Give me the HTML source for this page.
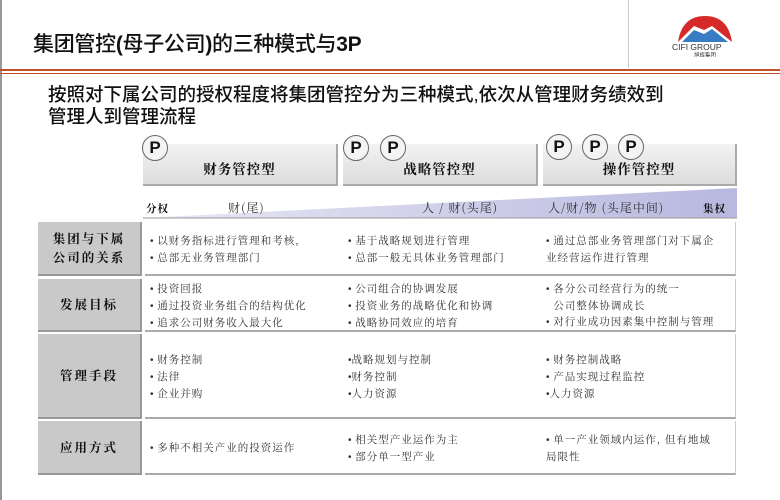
<!DOCTYPE html>
<html><head><meta charset="utf-8"><style>
*{margin:0;padding:0;box-sizing:border-box}
body{width:780px;height:500px;background:#fff;position:relative;overflow:hidden;font-family:"Liberation Sans","Noto Sans CJK SC",sans-serif;color:#111}
.a{position:absolute}
.title{left:33px;top:28px;font-size:21px;font-weight:500;letter-spacing:-0.3px}
.title b{font-weight:bold}
.sub{left:48px;top:84px;font-size:18.5px;line-height:22px;font-weight:500}
.hb{background:linear-gradient(#f3f3f3,#dcdcdc);border-right:2px solid #aaa;border-bottom:2px solid #aaa;font-family:"Noto Serif CJK SC",serif;font-weight:bold;font-size:13.5px;letter-spacing:1px;text-align:center;padding-top:14px}
.p{width:26px;height:26px;border-radius:50%;border:1px solid #666;background:#f4f4f4;font:bold 17px "Liberation Sans",sans-serif;text-align:center;line-height:24px}
.lab{left:38px;width:104px;background:#c9c9c9;border-right:2px solid #999;border-bottom:2px solid #999;font-family:"Noto Serif CJK SC",serif;font-weight:bold;font-size:12.5px;letter-spacing:2px;display:flex;align-items:center;justify-content:center;text-align:center;line-height:19px}
.row{left:145px;width:591px;border-bottom:2px solid #aaa;border-right:1px solid #ccc}
.t{font-family:"Noto Serif CJK SC",serif;font-size:10.5px;line-height:16px;color:#333;letter-spacing:1px;position:absolute}
i{font-style:normal;font-family:"Liberation Sans",sans-serif;font-size:10px;letter-spacing:0}
</style></head><body>
<div class="a" style="left:0;top:0;width:2px;height:500px;background:#999"></div>
<div class="a" style="left:628px;top:0;width:1px;height:68px;background:#ccc"></div>
<div class="a title">集团管控<b>(</b>母子公司<b>)</b>的三种模式与<b>3P</b></div>
<div class="a" style="left:0;top:69px;width:780px;height:2px;background:#c0502a"></div>
<div class="a" style="left:0;top:73px;width:780px;height:1px;background:#c0502a"></div>
<svg class="a" style="left:668px;top:12px" width="72" height="45" viewBox="0 0 72 45">
<path d="M10 30 Q14 4 37 4 Q60 4 64 30 L54 22 L44 14 L36 18 L26 14 L18 22Z" fill="#d62a2a"/>
<path d="M14 30 L26 18 L36 22 L44 17 L60 30 Z" fill="#3a7cc4"/>
<text x="4" y="38" font-size="8.5" font-family="Liberation Sans" fill="#333">CIFI  GROUP</text>
<text x="26" y="45" font-size="5.5" font-family="Noto Sans CJK SC" fill="#333">旭辉集团</text>
</svg>
<div class="a sub">按照对下属公司的授权程度将集团管控分为三种模式,依次从管理财务绩效到<br>管理人到管理流程</div>
<div class="a hb" style="left:143px;top:144px;width:195px;height:42px">财务管控型</div>
<div class="a hb" style="left:343px;top:144px;width:195px;height:42px">战略管控型</div>
<div class="a hb" style="left:543px;top:144px;width:194px;height:42px">操作管控型</div>
<div class="a p" style="left:142px;top:135px">P</div>
<div class="a p" style="left:343px;top:135px">P</div>
<div class="a p" style="left:380px;top:135px">P</div>
<div class="a p" style="left:546px;top:134px">P</div>
<div class="a p" style="left:582px;top:134px">P</div>
<div class="a p" style="left:618px;top:134px">P</div>
<svg class="a" style="left:143px;top:188px" width="594" height="32"><defs><linearGradient id="g"><stop offset="0" stop-color="#e8e8f4"/><stop offset="1" stop-color="#b8b8e0"/></linearGradient></defs><polygon points="0,30 594,0 594,30" fill="url(#g)"/><line x1="0" y1="30" x2="594" y2="30" stroke="#999"/></svg>
<div class="a t" style="left:146px;top:201px;font-weight:bold;color:#111">分权</div>
<div class="a t" style="left:228px;top:200px;font-size:12px">财(尾)</div>
<div class="a t" style="left:422px;top:200px;font-size:12px">人 / 财(头尾)</div>
<div class="a t" style="left:548px;top:200px;font-size:12px">人/财/物 (头尾中间)</div>
<div class="a t" style="left:703px;top:201px;font-weight:bold;color:#111">集权</div>

<div class="a lab" style="top:222px;height:54px">集团与下属<br>公司的关系</div>
<div class="a row" style="top:222px;height:54px"></div>
<div class="a t" style="left:150px;top:233px"><i>•</i> 以财务指标进行管理和考核,<br><i>•</i> 总部无业务管理部门</div>
<div class="a t" style="left:348px;top:233px"><i>•</i> 基于战略规划进行管理<br><i>•</i> 总部一般无具体业务管理部门</div>
<div class="a t" style="left:546px;top:233px"><i>•</i> 通过总部业务管理部门对下属企<br>业经营运作进行管理</div>

<div class="a lab" style="top:279px;height:53px">发展目标</div>
<div class="a row" style="top:279px;height:53px"></div>
<div class="a t" style="left:150px;top:281px"><i>•</i> 投资回报<br><i>•</i> 通过投资业务组合的结构优化<br><i>•</i> 追求公司财务收入最大化</div>
<div class="a t" style="left:348px;top:281px"><i>•</i> 公司组合的协调发展<br><i>•</i> 投资业务的战略优化和协调<br><i>•</i> 战略协同效应的培育</div>
<div class="a t" style="left:546px;top:281px"><i>•</i> 各分公司经营行为的统一<br>&nbsp;&nbsp;公司整体协调成长<br><i>•</i> 对行业成功因素集中控制与管理</div>

<div class="a lab" style="top:334px;height:85px">管理手段</div>
<div class="a row" style="top:334px;height:85px"></div>
<div class="a t" style="left:150px;top:352px"><i>•</i> 财务控制<br><i>•</i> 法律<br><i>•</i> 企业并购</div>
<div class="a t" style="left:348px;top:352px"><i>•</i>战略规划与控制<br><i>•</i>财务控制<br><i>•</i>人力资源</div>
<div class="a t" style="left:546px;top:352px"><i>•</i> 财务控制战略<br><i>•</i> 产品实现过程监控<br><i>•</i>人力资源</div>

<div class="a lab" style="top:421px;height:54px">应用方式</div>
<div class="a row" style="top:421px;height:54px"></div>
<div class="a t" style="left:150px;top:440px"><i>•</i> 多种不相关产业的投资运作</div>
<div class="a t" style="left:348px;top:432px"><i>•</i> 相关型产业运作为主<br><i>•</i> 部分单一型产业</div>
<div class="a t" style="left:546px;top:432px"><i>•</i> 单一产业领域内运作, 但有地域<br>局限性</div>
</body></html>
